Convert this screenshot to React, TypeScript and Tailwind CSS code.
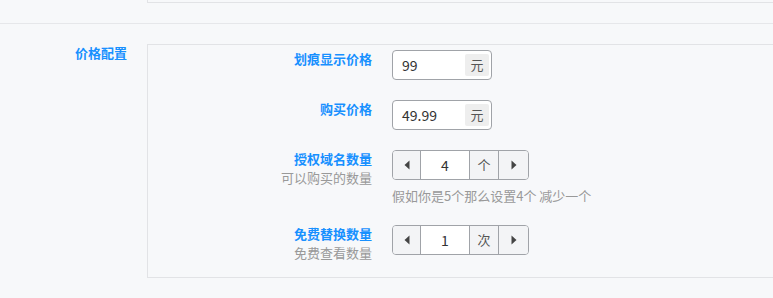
const FONT = "font-['Noto_Sans_CJK_SC','Noto_Sans',sans-serif]";

const Caret = ({ dir }: { dir: "left" | "right" }) => (
  <svg width="6" height="10" viewBox="0 0 6 10">
    {dir === "left" ? (
      <path d="M5.5 0.5 L0.5 5 L5.5 9.5 Z" fill="#444" />
    ) : (
      <path d="M0.5 0.5 L5.5 5 L0.5 9.5 Z" fill="#444" />
    )}
  </svg>
);

const UnitInput = ({ value, unit }: { value: string; unit: string }) => (
  <div className="flex items-center w-[100px] h-[30px] border border-[#a0a3a8] rounded-[4px] bg-white pl-[9px] pr-[2px]">
    <span className="flex-1 text-[14px] text-[#333]">{value}</span>
    <span className="w-[24px] h-[22px] bg-[#eeeeee] rounded-[2px] flex items-center justify-center text-[13px] text-[#555]">
      {unit}
    </span>
  </div>
);

const Stepper = ({ value, unit }: { value: string; unit: string }) => (
  <div className="flex w-[137px] h-[30px] border border-[#a0a3a8] rounded-[4px] overflow-hidden">
    <div className="w-[28px] bg-[#f3f4f6] flex items-center justify-center border-r border-[#a0a3a8]">
      <Caret dir="left" />
    </div>
    <div className="w-[49px] bg-white flex items-center justify-center text-[14px] text-[#333] border-r border-[#a0a3a8]">
      {value}
    </div>
    <div className="w-[29px] bg-[#f3f4f6] flex items-center justify-center text-[13px] text-[#555] border-r border-[#a0a3a8]">
      {unit}
    </div>
    <div className="flex-1 bg-[#f3f4f6] flex items-center justify-center">
      <Caret dir="right" />
    </div>
  </div>
);

const Label = ({ title, sub }: { title: string; sub?: string }) => (
  <div className="w-[224px] text-right">
    <div className="text-[13px] leading-[18px] font-bold text-[#1890ff]">{title}</div>
    {sub && <div className="text-[13px] leading-[20px] text-[#999]">{sub}</div>}
  </div>
);

export default function App() {
  return (
    <div className={`w-[773px] h-[298px] overflow-hidden bg-[#f7f8fa] ${FONT}`}>
      <div className="ml-[147px] h-[3px] border-l border-b border-[#e2e3e6]" />
      <div className="mt-[20px] border-t border-[#e6e7ea] pt-[20px] flex">
        <div className="w-[127px] text-right text-[13px] leading-[20px] font-bold text-[#1890ff] -mt-[1px]">
          价格配置
        </div>
        <div className="ml-[20px] flex-1 border-t border-l border-b border-[#e2e3e6] pt-[5px] pb-[14px]">
          <div className="flex gap-[20px]">
            <Label title="划痕显示价格" />
            <UnitInput value="99" unit="元" />
          </div>
          <div className="flex gap-[20px] mt-[20px]">
            <Label title="购买价格" />
            <UnitInput value="49.99" unit="元" />
          </div>
          <div className="flex gap-[20px] mt-[20px]">
            <Label title="授权域名数量" sub="可以购买的数量" />
            <div>
              <Stepper value="4" unit="个" />
              <div className="mt-[7px] text-[13px] leading-[18px] text-[#999]">
                假如你是5个那么设置4个 减少一个
              </div>
            </div>
          </div>
          <div className="flex gap-[20px] mt-[20px]">
            <Label title="免费替换数量" sub="免费查看数量" />
            <Stepper value="1" unit="次" />
          </div>
        </div>
      </div>
    </div>
  );
}
